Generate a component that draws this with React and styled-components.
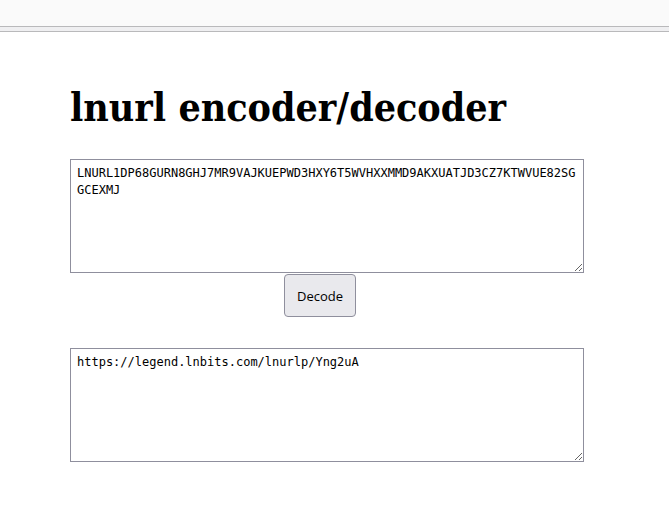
import React from "react";
import styled, { createGlobalStyle } from "styled-components";

const Global = createGlobalStyle`
  html, body { margin: 0; padding: 0; background: #ffffff; }
  body { font-family: "DejaVu Sans", sans-serif; }
`;

const Chrome = styled.div`
  height: 26px;
  background: #fafafa;
  border-bottom: 1px solid #b9b9bb;
`;

const ChromeStrip = styled.div`
  height: 4px;
  background: #efeff1;
  border-bottom: 1px solid #b9b9bb;
`;

const Main = styled.main`
  padding: 49px 0 0 70px;
  display: flex;
  flex-direction: column;
  align-items: flex-start;
`;

const Title = styled.h1`
  margin: 0 0 26px 0;
  font-family: "DejaVu Serif Condensed", "DejaVu Serif", serif;
  font-stretch: semi-condensed;
  font-weight: bold;
  font-size: 39px;
  line-height: 52px;
  color: #000;
`;

const Area = styled.textarea`
  box-sizing: border-box;
  width: 514px;
  height: 114px;
  padding: 5px 6px;
  border: 1px solid #8f8f9d;
  border-radius: 0;
  font-family: "DejaVu Sans Mono", monospace;
  font-size: 12px;
  line-height: 17px;
  color: #000;
  background: #fff;
  resize: vertical;
  word-break: break-all;
  margin: 0;
`;

const Button = styled.button`
  box-sizing: border-box;
  margin: 1px 0 31px 214px;
  height: 43px;
  padding: 0 12px;
  font-family: "Open Sans", sans-serif;
  font-size: 13px;
  color: #000;
  background: #e9e9ed;
  border: 1px solid #8f8f9d;
  border-radius: 4px;
`;

export default function App() {
  return (
    <>
      <Global />
      <Chrome />
      <ChromeStrip />
      <Main>
        <Title>lnurl encoder/decoder</Title>
        <Area
          readOnly
          defaultValue="LNURL1DP68GURN8GHJ7MR9VAJKUEPWD3HXY6T5WVHXXMMD9AKXUATJD3CZ7KTWVUE82SGGCEXMJ"
        />
        <Button>Decode</Button>
        <Area readOnly defaultValue="https://legend.lnbits.com/lnurlp/Yng2uA" />
      </Main>
    </>
  );
}
